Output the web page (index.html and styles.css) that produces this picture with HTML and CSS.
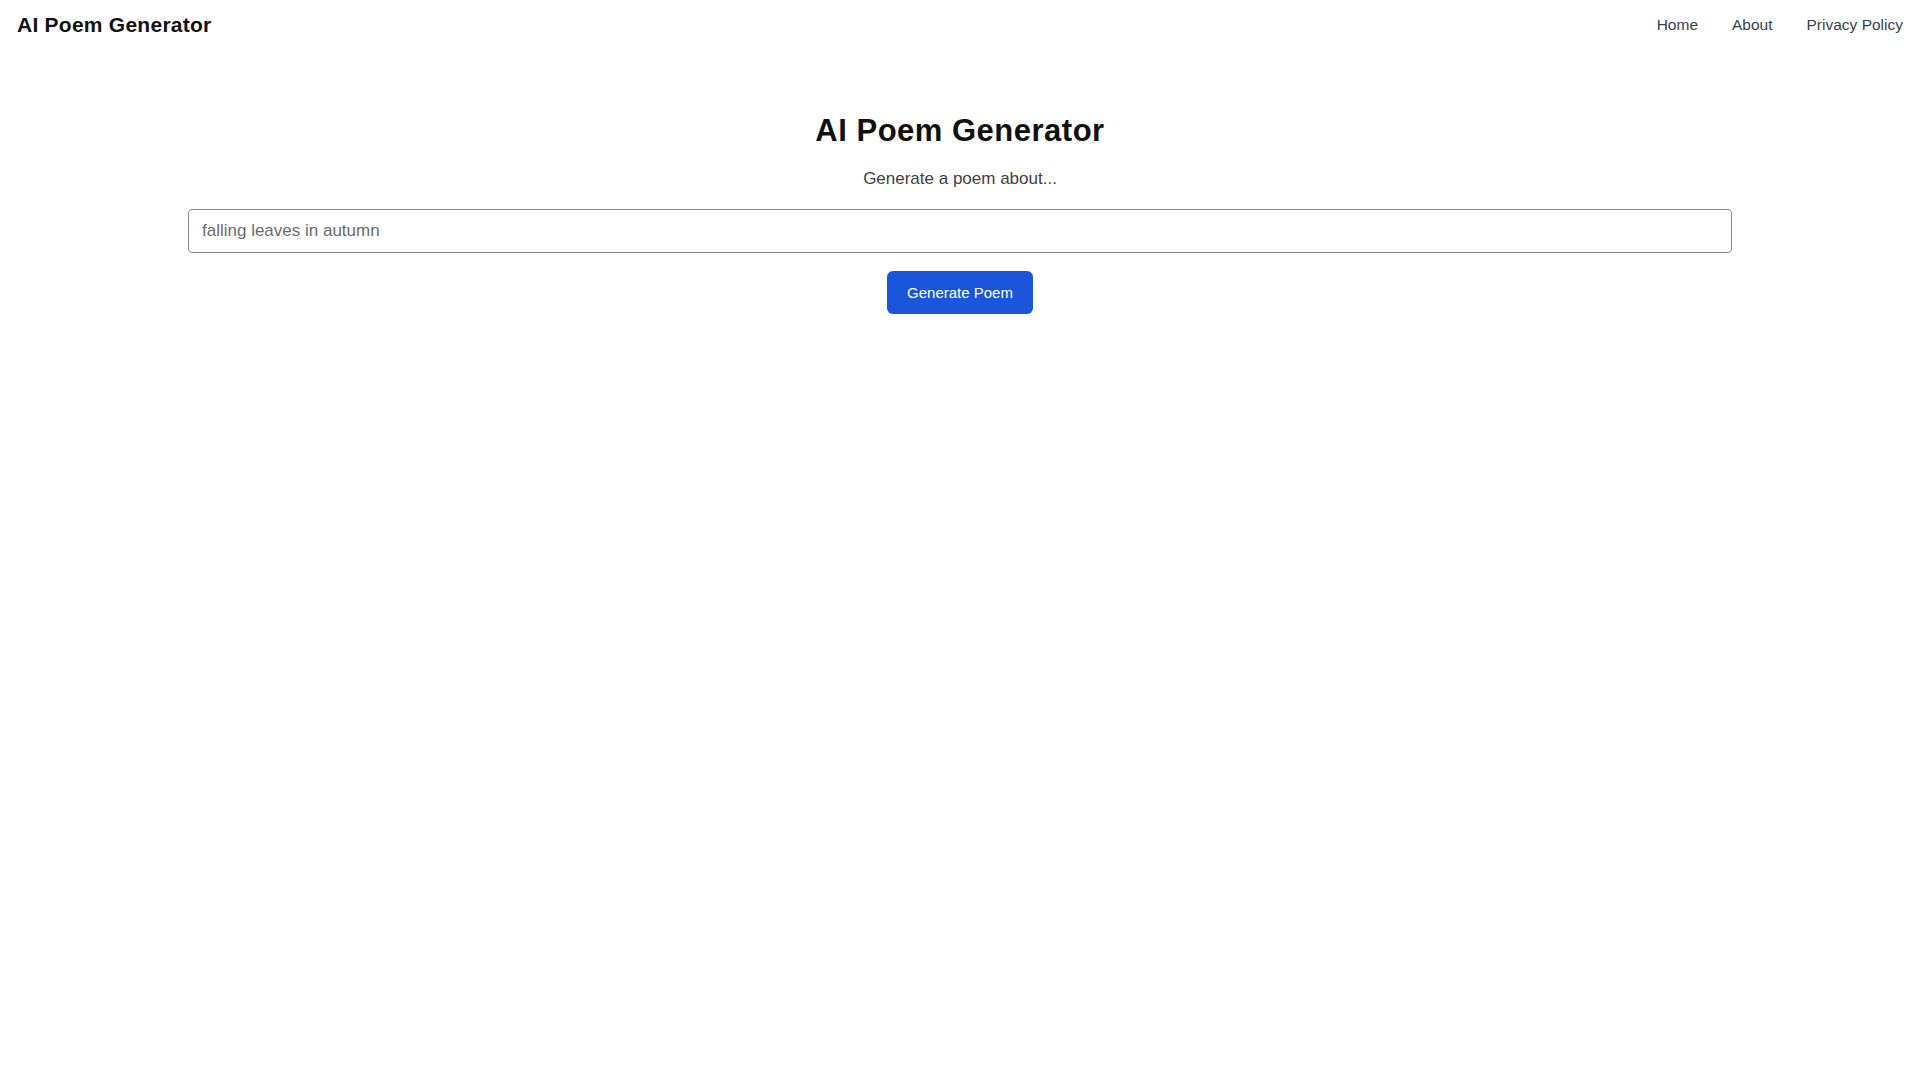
FILE: index.html
```html
<!DOCTYPE html>
<html lang="en">
<head>
  <meta charset="UTF-8">
  <meta name="viewport" content="width=device-width, initial-scale=1.0">
  <title>AI Poem Generator</title>
  <link rel="stylesheet" href="styles.css">
</head>
<body>
  <!-- Top bar -->
  <header class="topbar">
    <a class="brand" href="#">AI Poem Generator</a>
    <nav class="nav">
      <a href="#">Home</a>
      <a href="#">About</a>
      <a href="#">Privacy Policy</a>
    </nav>
  </header>

  <!-- Poem form -->
  <main class="generator">
    <h1>AI Poem Generator</h1>
    <p class="prompt-label">Generate a poem about...</p>
    <input type="text" class="prompt-input" placeholder="falling leaves in autumn">
    <button class="generate">Generate Poem</button>
  </main>
</body>
</html>
```

FILE: styles.css
```css
body {
  margin: 0;
  padding: 0;
  background-color: #ffffff;
  font-family: "Liberation Sans", Arial, sans-serif;
  color: #111111;
}

.topbar {
  height: 50px;
  padding: 0 17px;
  display: flex;
  justify-content: space-between;
  align-items: center;
}

.brand {
  font-size: 21px;
  letter-spacing: 0.25px;
  font-weight: bold;
  color: #111111;
  text-decoration: none;
}

.nav {
  display: flex;
  gap: 34px;
}

.nav a {
  font-size: 15.5px;
  color: #374151;
  text-decoration: none;
}

.generator {
  margin-top: 63px;
  padding: 0 188px;
  display: flex;
  flex-direction: column;
  align-items: center;
  gap: 18px;
}

.generator h1 {
  margin: 0;
  font-size: 31px;
  letter-spacing: 0.5px;
  line-height: 36px;
  font-weight: bold;
  color: #111111;
}

.prompt-label {
  margin: 0;
  font-size: 17px;
  line-height: 24px;
  color: #3f3f46;
}

.prompt-input {
  box-sizing: border-box;
  width: 100%;
  height: 44px;
  padding: 0 13px;
  border: 1px solid #8a8a8a;
  border-radius: 4px;
  font-family: inherit;
  font-size: 17px;
  color: #111111;
}

.prompt-input::placeholder {
  color: #6b6b6b;
}

.generate {
  height: 43px;
  padding: 0 20px;
  border: none;
  border-radius: 6px;
  background-color: #1a56db;
  color: #ffffff;
  font-family: inherit;
  font-size: 15px;
  cursor: pointer;
}

.generate:hover {
  background-color: #1e429f;
}
```
